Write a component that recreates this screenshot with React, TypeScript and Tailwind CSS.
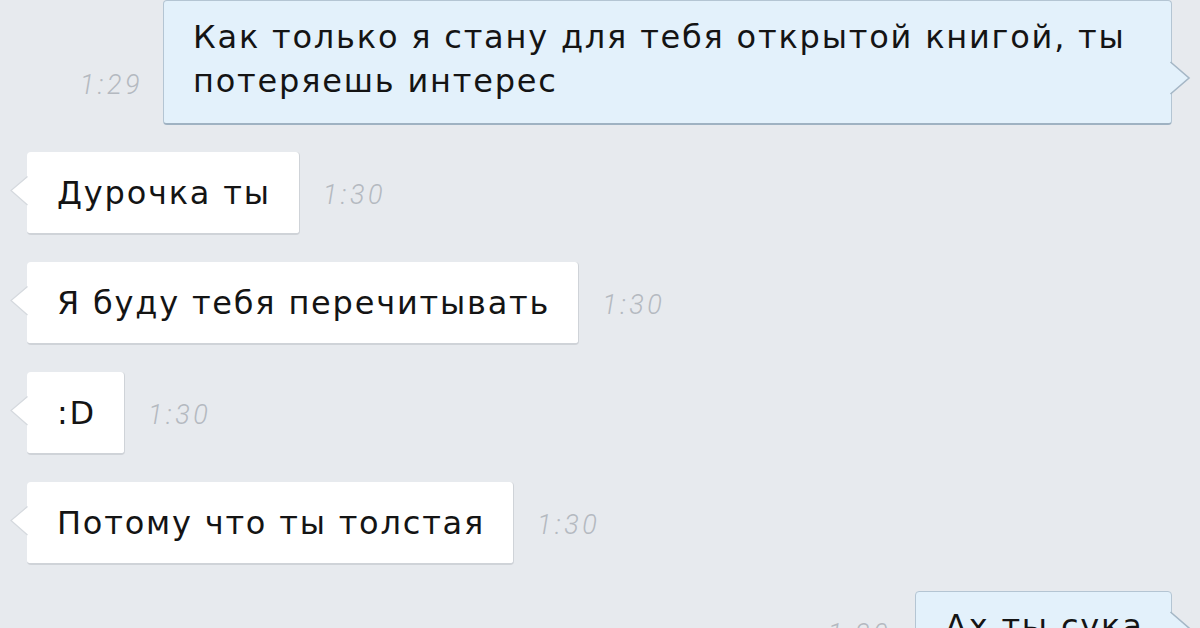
import React from "react";

type Msg = { text: React.ReactNode; time: string; out?: boolean };

const incoming: Msg[] = [
  { text: "Дурочка ты", time: "1:30" },
  { text: "Я буду тебя перечитывать", time: "1:30" },
  { text: ":D", time: "1:30" },
  { text: "Потому что ты толстая", time: "1:30" },
];

// Little arrow on the side of a bubble, pointing at the sender
function Tail({ side }: { side: "left" | "right" }) {
  if (side === "left") {
    return (
      <svg
        width="20"
        height="34"
        viewBox="0 0 20 34"
        className="absolute left-[-17px] bottom-[24px]"
      >
        <path d="M19 1 L1 15.5 L19 31 Z" fill="#ffffff" />
        <path d="M17.5 1.5 L1 15.5 L17.5 30" fill="none" stroke="#d5d9de" strokeWidth="1.2" />
      </svg>
    );
  }
  return (
    <svg
      width="22"
      height="36"
      viewBox="0 0 22 36"
      className="absolute right-[-20px] bottom-[26px]"
    >
      <path d="M1 1 L20 17 L1 33 Z" fill="#e3f1fb" />
      <path d="M1.5 1 L20 17 L1.5 33" fill="none" stroke="#a5b7c6" strokeWidth="1.6" />
    </svg>
  );
}

function Time({ value }: { value: string }) {
  return (
    <span
      className="text-[27px] italic font-light text-[#b4b9c0] tracking-[3.5px] leading-none"
      style={{ fontFamily: "Roboto, sans-serif" }}
    >
      {value}
    </span>
  );
}

export default function App() {
  return (
    <div
      className="w-[1200px] h-[628px] overflow-hidden bg-[#e7eaee] flex flex-col text-[#141414]"
      style={{ fontFamily: "'DejaVu Sans', Roboto, sans-serif" }}
    >
      {/* first outgoing message, top is cut off */}
      <div className="flex justify-end items-end gap-[20px] pr-[28px]">
        <div className="pb-[24px]">
          <Time value="1:29" />
        </div>
        <div className="relative w-[1009px] bg-[#e3f1fb] border border-[#b4c5d3] border-b-2 border-b-[#9fb2c2] rounded-[4px] pl-[29px] pr-[20px] pt-[14px] pb-[20px]">
          <p className="text-[32px] leading-[44px] tracking-[1.8px]">
            Как только я стану для тебя открытой книгой, ты
            <br />
            потеряешь интерес
          </p>
          <Tail side="right" />
        </div>
      </div>

      {/* incoming messages */}
      <div className="flex flex-col gap-[27px] mt-[27px] pl-[27px]">
        {incoming.map((m, i) => (
          <div key={i} className="flex items-center gap-[23px]">
            <div className="relative h-[83px] bg-white rounded-[4px] border-b-2 border-r border-[#cfd3d8] pl-[30px] pr-[28px] flex items-center">
              <span className="text-[32px] leading-none tracking-[1.8px]">{m.text}</span>
              <Tail side="left" />
            </div>
            <div className="pt-[6px]">
              <Time value={m.time} />
            </div>
          </div>
        ))}
      </div>

      {/* last outgoing message, bottom is cut off */}
      <div className="mt-[26px] flex justify-end items-start gap-[24px] pr-[28px]">
        <div className="pt-[30px]">
          <Time value="1:30" />
        </div>
        <div className="relative w-[257px] h-[83px] bg-[#e3f1fb] border border-[#b4c5d3] rounded-[4px] pl-[29px] pt-[18px]">
          <span className="text-[32px] leading-none tracking-[1.8px]">Ах ты сука</span>
          <Tail side="right" />
        </div>
      </div>
    </div>
  );
}
